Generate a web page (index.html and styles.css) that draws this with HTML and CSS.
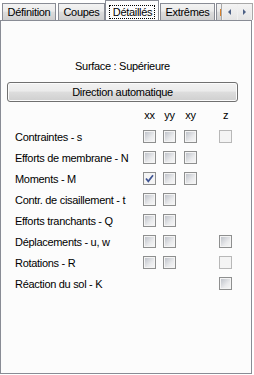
FILE: index.html
```html
<!DOCTYPE html>
<html lang="fr">
<head>
    <meta charset="UTF-8">
    <meta name="viewport" content="width=device-width, initial-scale=1.0">
    <title>Détaillés</title>
    <link rel="stylesheet" href="styles.css">
</head>
<body>
    <div class="tab-bar">
        <div class="tab-strip">
            <div class="tab tab-def">Définition</div>
            <div class="tab tab-coupes">Coupes</div>
            <div class="tab tab-active"><span class="focus">Détaillés</span></div>
            <div class="tab tab-ext">Extrêmes</div>
            <div class="tab tab-more"><span class="mark"></span></div>
        </div>
        <div class="tab-scroll">
            <div class="scroll-btn"><span class="arrow arrow-left"></span></div>
            <div class="scroll-btn"><span class="arrow arrow-right"></span></div>
        </div>
    </div>

    <div class="panel">
        <div class="surface">Surface : Supérieure</div>
        <button class="button">Direction automatique</button>

        <div class="grid">
            <div class="head"></div>
            <div class="head">xx</div>
            <div class="head">yy</div>
            <div class="head">xy</div>
            <div class="head">z</div>

            <div class="label">Contraintes - s</div>
            <div class="cell"><span class="cb"></span></div>
            <div class="cell"><span class="cb"></span></div>
            <div class="cell"><span class="cb"></span></div>
            <div class="cell"><span class="cb disabled"></span></div>

            <div class="label">Efforts de membrane - N</div>
            <div class="cell"><span class="cb"></span></div>
            <div class="cell"><span class="cb"></span></div>
            <div class="cell"><span class="cb"></span></div>
            <div class="cell"></div>

            <div class="label">Moments - M</div>
            <div class="cell"><span class="cb checked"><svg width="11" height="11" viewBox="0 0 11 11"><path d="M2 5.5 L4.3 8.3 L9 2.2" fill="none" stroke="#3f5493" stroke-width="1.7"/></svg></span></div>
            <div class="cell"><span class="cb"></span></div>
            <div class="cell"><span class="cb"></span></div>
            <div class="cell"></div>

            <div class="label">Contr. de cisaillement - t</div>
            <div class="cell"><span class="cb"></span></div>
            <div class="cell"><span class="cb"></span></div>
            <div class="cell"></div>
            <div class="cell"></div>

            <div class="label">Efforts tranchants - Q</div>
            <div class="cell"><span class="cb"></span></div>
            <div class="cell"><span class="cb"></span></div>
            <div class="cell"></div>
            <div class="cell"></div>

            <div class="label">Déplacements - u, w</div>
            <div class="cell"><span class="cb"></span></div>
            <div class="cell"><span class="cb"></span></div>
            <div class="cell"></div>
            <div class="cell"><span class="cb"></span></div>

            <div class="label">Rotations - R</div>
            <div class="cell"><span class="cb"></span></div>
            <div class="cell"><span class="cb"></span></div>
            <div class="cell"></div>
            <div class="cell"><span class="cb disabled"></span></div>

            <div class="label">Réaction du sol - K</div>
            <div class="cell"></div>
            <div class="cell"></div>
            <div class="cell"></div>
            <div class="cell"><span class="cb"></span></div>
        </div>
    </div>
</body>
</html>
```

FILE: styles.css
```css
body {
    margin: 0;
    background-color: #fff;
    font-family: 'Liberation Sans', Arial, sans-serif;
    font-size: 11px;
    letter-spacing: -0.3px;
    color: #000;
}

/* tab header */
.tab-bar {
    display: flex;
    height: 20px;
    width: 254px;
}

.tab-strip {
    display: flex;
    align-items: flex-end;
    width: 221px;
    overflow: hidden;
    position: relative;
    z-index: 1;
}

.tab {
    flex: none;
    height: 17px;
    line-height: 16px;
    text-align: center;
    border: 1px solid #898c95;
    border-bottom: none;
    background: linear-gradient(#f3f3f3, #ebebeb 45%, #dddddd 50%, #cfcfcf);
    box-sizing: border-box;
}

.tab-def {
    width: 54px;
    margin-left: 2px;
}

.tab-coupes {
    width: 47px;
    margin-left: 2px;
}

.tab-active {
    width: 54px;
    height: 21px;
    margin-bottom: -1px;
    line-height: 20px;
    background: #fcfcfc;
    padding-top: 1px;
}

.focus {
    border: 1px dotted #000;
    padding: 0 2px 0 3px;
}

.tab-ext {
    width: 55px;
    margin-left: 1px;
}

.tab-more {
    width: 55px;
    margin-left: 1px;
    display: flex;
    align-items: center;
    padding-left: 3px;
}

.mark {
    width: 2px;
    height: 7px;
    background: linear-gradient(90deg, #d9822b 50%, #4a5fa8 50%);
}

.tab-scroll {
    display: flex;
    gap: 1px;
    margin-top: 3px;
    height: 17px;
    padding: 0 1px;
    border: 1px solid #a8a8a8;
    border-bottom: none;
    box-sizing: border-box;
    width: 32px;
    background: #f0f0f0;
}

.scroll-btn {
    width: 14px;
    display: flex;
    align-items: center;
    justify-content: center;
    background: linear-gradient(#f4f4f4, #e4e4e4);
}

.arrow {
    width: 0;
    height: 0;
    border-top: 3px solid transparent;
    border-bottom: 3px solid transparent;
}

.arrow-left {
    border-right: 3px solid #4d6185;
}

.arrow-right {
    border-left: 3px solid #4d6185;
}

/* panel */
.panel {
    width: 252px;
    height: 354px;
    box-sizing: border-box;
    border: 1px solid #898c95;
    background: #fcfcfc;
    padding: 39px 0 0 6px;
}

.surface {
    width: 231px;
    line-height: 13px;
    text-align: center;
}

.button {
    display: block;
    width: 231px;
    height: 20px;
    margin-top: 9px;
    padding: 0;
    border: 1px solid #707070;
    border-radius: 3px;
    background: linear-gradient(#f2f2f2, #ebebeb 45%, #dddddd 50%, #cfcfcf);
    box-shadow: inset 0 0 0 1px #fbfbfb;
    font-family: inherit;
    font-size: 11px;
    letter-spacing: -0.3px;
    color: #000;
}

.grid {
    display: grid;
    grid-template-columns: 128px 20px 21px 35px 14px;
    grid-auto-rows: 21px;
    margin: 3px 0 0 8px;
}

.head {
    display: flex;
    align-items: center;
    justify-content: center;
    width: 13px;
    padding-bottom: 1px;
}

.label {
    display: flex;
    align-items: center;
    white-space: nowrap;
}

.cell {
    display: flex;
    align-items: center;
}

.cb {
    display: flex;
    align-items: center;
    justify-content: center;
    width: 13px;
    height: 13px;
    box-sizing: border-box;
    border: 1px solid #8e8f8f;
    box-shadow: inset 0 0 0 1px #f4f4f4;
    background: linear-gradient(135deg, #b9bdc5, #e9eaec 60%, #f8f8f8);
}

.cb.checked {
    background: #f4f4f4;
}

.cb.disabled {
    border-color: #b8b8b8;
    box-shadow: none;
    background: #f4f4f4;
}
```
